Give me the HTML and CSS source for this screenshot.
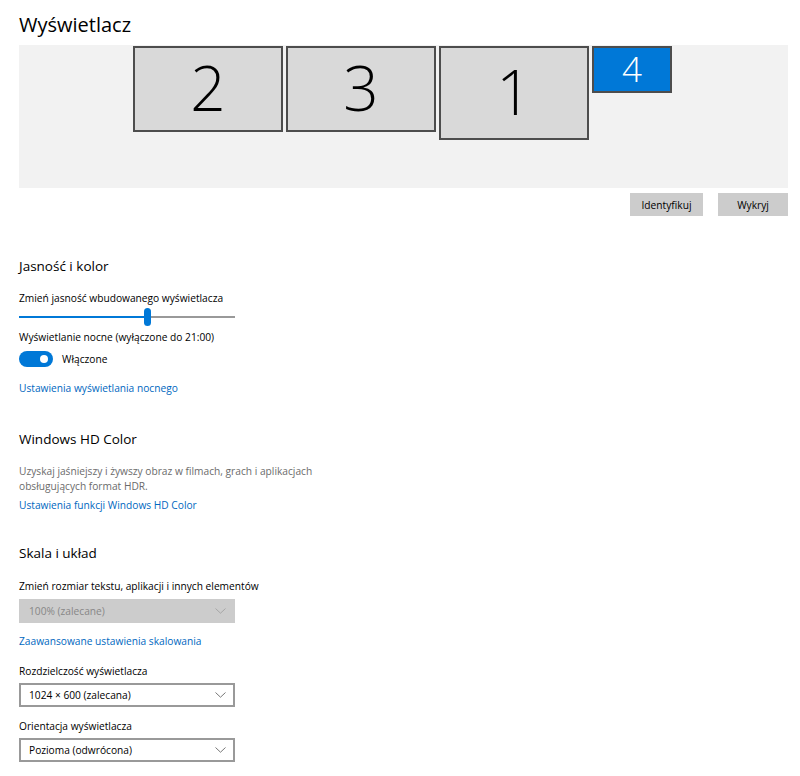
FILE: index.html
```html
<!DOCTYPE html>
<html lang="pl">
<head>
<meta charset="utf-8">
<title>Wyświetlacz</title>
<link rel="stylesheet" href="styles.css">
</head>
<body>
<div class="page">
  <h1 class="title">Wyświetlacz</h1>

  <div class="arrangement">
    <div class="monitor m2">2</div>
    <div class="monitor m3">3</div>
    <div class="monitor m1">1</div>
    <div class="monitor m4 active">4</div>
  </div>

  <div class="actions">
    <button class="btn btn-identify">Identyfikuj</button>
    <button class="btn btn-detect">Wykryj</button>
  </div>

  <section class="group group-brightness">
    <h2 class="group-title">Jasność i kolor</h2>
    <div class="label label-brightness">Zmień jasność wbudowanego wyświetlacza</div>
    <div class="slider">
      <div class="slider-track"></div>
      <div class="slider-fill" style="width:128px"></div>
      <div class="slider-thumb" style="left:125px"></div>
    </div>
    <div class="label label-night">Wyświetlanie nocne (wyłączone do 21:00)</div>
    <div class="toggle-row">
      <span class="toggle on"><span class="toggle-knob"></span></span>
      <span class="toggle-text">Włączone</span>
    </div>
    <a class="link link-night">Ustawienia wyświetlania nocnego</a>
  </section>

  <section class="group group-hd">
    <h2 class="group-title">Windows HD Color</h2>
    <p class="desc">Uzyskaj jaśniejszy i żywszy obraz w filmach, grach i aplikacjach<br>obsługujących format HDR.</p>
    <a class="link link-hd">Ustawienia funkcji Windows HD Color</a>
  </section>

  <section class="group group-scale">
    <h2 class="group-title">Skala i układ</h2>
    <div class="label label-scale">Zmień rozmiar tekstu, aplikacji i innych elementów</div>
    <div class="select disabled select-scale">
      <span class="select-value">100% (zalecane)</span>
      <svg class="chev" width="11" height="6" viewBox="0 0 11 6"><polyline points="0.5,0.5 5.5,5.2 10.5,0.5" fill="none" stroke="currentColor" stroke-width="1"/></svg>
    </div>
    <a class="link link-scale">Zaawansowane ustawienia skalowania</a>
    <div class="label label-res">Rozdzielczość wyświetlacza</div>
    <div class="select select-res">
      <span class="select-value">1024 × 600 (zalecana)</span>
      <svg class="chev" width="11" height="6" viewBox="0 0 11 6"><polyline points="0.5,0.5 5.5,5.2 10.5,0.5" fill="none" stroke="currentColor" stroke-width="1"/></svg>
    </div>
    <div class="label label-orient">Orientacja wyświetlacza</div>
    <div class="select select-orient">
      <span class="select-value">Pozioma (odwrócona)</span>
      <svg class="chev" width="11" height="6" viewBox="0 0 11 6"><polyline points="0.5,0.5 5.5,5.2 10.5,0.5" fill="none" stroke="currentColor" stroke-width="1"/></svg>
    </div>
  </section>
</div>
</body>
</html>
```

FILE: styles.css
```css
html, body {
  margin: 0;
  padding: 0;
  background: #ffffff;
}

body {
  font-family: "Open Sans", "Noto Sans", "Liberation Sans", sans-serif;
  font-size: 10.2px;
  line-height: 16px;
  color: #000000;
}

.page {
  padding: 0 12px 0 19px;
}

.title {
  margin: 0;
  padding-top: 11px;
  font-size: 20px;
  line-height: 28px;
  font-weight: 400;
}

.arrangement {
  position: relative;
  margin-top: 6px;
  height: 143px;
  background: #f2f2f2;
}

.monitor {
  position: absolute;
  top: 1px;
  box-sizing: border-box;
  width: 150px;
  height: 86px;
  border: 2px solid #4d4d4d;
  background: #d9d9d9;
  display: flex;
  align-items: center;
  justify-content: center;
  font-family: "Open Sans", "Lato", sans-serif;
  font-weight: 300;
  font-size: 62px;
  line-height: 1;
  color: #000;
  padding-bottom: 4px;
}

.m2 { left: 114px; }
.m3 { left: 267px; }
.m1 { left: 420px; height: 94px; }
.m4 {
  left: 573px;
  width: 80px;
  height: 47px;
  font-size: 35px;
  padding-bottom: 2px;
}

.monitor.active {
  background: #0078d7;
  color: #ffffff;
}

.actions {
  display: flex;
  justify-content: flex-end;
  gap: 15px;
  margin-top: 5px;
}

.btn {
  margin: 0;
  border: 0;
  height: 23px;
  padding: 0;
  background: #cccccc;
  font-family: inherit;
  font-size: 10.2px;
  color: #000;
}

.btn-identify { width: 73px; }
.btn-detect { width: 70px; }

.group-title {
  margin: 0;
  font-size: 13.5px;
  line-height: 20px;
  font-weight: 400;
}

.group-brightness .group-title { margin-top: 40px; }
.group-hd .group-title { margin-top: 33px; }
.group-scale .group-title { margin-top: 30px; }

.label {
  height: 16px;
}

.label-brightness { margin-top: 14px; }
.label-night { margin-top: 3px; }
.label-scale { margin-top: 15px; }
.label-res { margin-top: 14px; }
.label-orient { margin-top: 11px; }

.slider {
  position: relative;
  width: 216px;
  height: 20px;
}

.slider-track {
  position: absolute;
  left: 0;
  right: 0;
  top: 10px;
  height: 2px;
  background: #999999;
}

.slider-fill {
  position: absolute;
  left: 0;
  top: 10px;
  height: 2px;
  background: #0078d7;
}

.slider-thumb {
  position: absolute;
  top: 2px;
  width: 7px;
  height: 18px;
  border-radius: 4px;
  background: #0078d7;
}

.toggle-row {
  display: flex;
  align-items: center;
  gap: 9px;
  margin-top: 6px;
  height: 16px;
}

.toggle {
  position: relative;
  box-sizing: border-box;
  width: 34px;
  height: 16px;
  border-radius: 8px;
  background: #0078d7;
}

.toggle-knob {
  position: absolute;
  right: 5px;
  top: 4px;
  width: 8px;
  height: 8px;
  border-radius: 50%;
  background: #ffffff;
}

.link {
  display: block;
  color: #0067c0;
  text-decoration: none;
  height: 16px;
}

.link-night { margin-top: 13px; }
.link-hd { margin-top: 3px; }
.link-scale { margin-top: 10px; }

.desc {
  margin: 15px 0 0;
  line-height: 15px;
  color: #6b6b6b;
}

.select {
  box-sizing: border-box;
  display: flex;
  align-items: center;
  justify-content: space-between;
  width: 216px;
  height: 24px;
  margin-top: 4px;
  padding: 0 7px 1px 8px;
  border: 2px solid #999999;
  background: #ffffff;
  color: #000;
}

.select-scale { margin-top: 5px; }

.select .chev {
  color: #777777;
}

.select.disabled {
  border-color: #cccccc;
  background: #cccccc;
  color: #878787;
}

.select.disabled .chev {
  color: #a6a6a6;
}
```
